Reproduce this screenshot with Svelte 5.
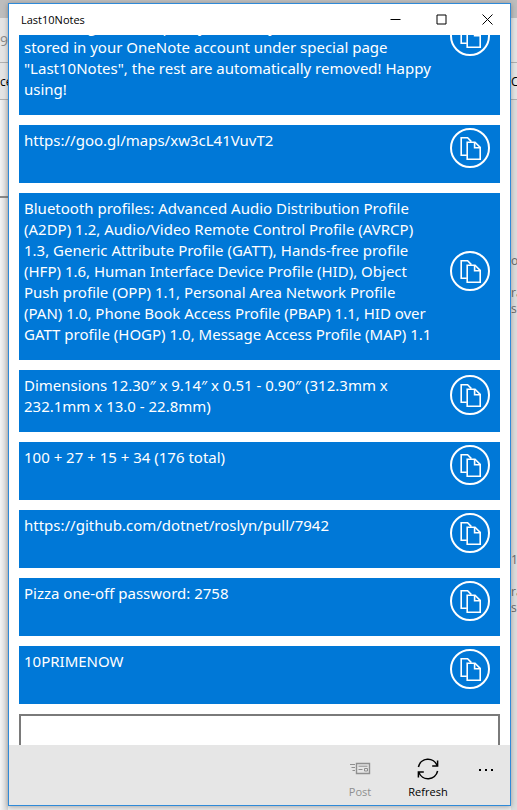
<script>
  import { onMount } from 'svelte'

  const notes = [
    'Welcome to Last10Notes!\nType a note below and press Post to save it.\nAlso using it we keep only last 10 by date\nstored in your OneNote account under special page\n"Last10Notes", the rest are automatically removed! Happy\nusing!',
    'https://goo.gl/maps/xw3cL41VuvT2',
    'Bluetooth profiles: Advanced Audio Distribution Profile\n(A2DP) 1.2, Audio/Video Remote Control Profile (AVRCP)\n1.3, Generic Attribute Profile (GATT), Hands-free profile\n(HFP) 1.6, Human Interface Device Profile (HID), Object\nPush profile (OPP) 1.1, Personal Area Network Profile\n(PAN) 1.0, Phone Book Access Profile (PBAP) 1.1, HID over\nGATT profile (HOGP) 1.0, Message Access Profile (MAP) 1.1',
    'Dimensions 12.30″ x 9.14″ x 0.51 - 0.90″ (312.3mm x\n232.1mm x 13.0 - 22.8mm)',
    '100 + 27 + 15 + 34 (176 total)',
    'https://github.com/dotnet/roslyn/pull/7942',
    'Pizza one-off password: 2758',
    '10PRIMENOW'
  ]

  let list
  let draft = $state('')

  // the welcome note starts half scrolled away
  onMount(() => {
    list.scrollTop = 66
  })

  function copy(note) {
    navigator.clipboard?.writeText(note)
  }
</script>

<div class="desktop">
  <div class="backdrop" aria-hidden="true">
    <div class="strip"></div>
    <div class="row tabs"><span>9</span></div>
    <div class="row menu"><span>ce</span><span>C</span></div>
    <div class="page">
      <div class="side"><div class="rule"></div></div>
      <div class="side right">
        <p>or</p>
        <p>ra<br />s:</p>
        <p class="later">1:</p>
        <p>ra<br />s:</p>
      </div>
    </div>
  </div>

  <main class="window">
    <header>
      <h1>Last10Notes</h1>
      <button class="caption" aria-label="Minimize">
        <svg width="11" height="11" viewBox="0 0 11 11"><path d="M0.5 5.5H10.5" /></svg>
      </button>
      <button class="caption" aria-label="Maximize">
        <svg width="11" height="11" viewBox="0 0 11 11"><path d="M1 1H10V10H1Z" /></svg>
      </button>
      <button class="caption" aria-label="Close">
        <svg width="11" height="11" viewBox="0 0 11 11"><path d="M0.5 0.5L10.5 10.5M10.5 0.5L0.5 10.5" /></svg>
      </button>
    </header>

    <div class="list" bind:this={list}>
      {#each notes as note}
        <article class="note">
          <p>{note}</p>
          <button class="copy" aria-label="Copy note" onclick={() => copy(note)}>
            <svg width="40" height="40" viewBox="0 0 40 40">
              <circle cx="20" cy="20" r="19" stroke-width="2" />
              <path d="M16.8 27.2H11.2V9.8H17.6L21.4 13.6" />
              <path d="M17.2 14.2H25L30.2 19.4V31.2H17.2Z" />
              <path d="M24.6 14.2V19.8H30.2" />
            </svg>
          </button>
        </article>
      {/each}
      <textarea aria-label="New note" bind:value={draft}></textarea>
    </div>

    <footer>
      <button class="command" disabled={!draft}>
        <svg width="22" height="22" viewBox="0 0 22 22">
          <path d="M7.5 5.5H20.5V15.5H7.5Z" stroke-width="1.4" />
          <path d="M1 6.5H6M2.5 9.5H6M3.5 12.5H6M9.5 8.2H18.5M9.5 11.5H13.5M15.5 10.5H18.5V13H15.5Z" />
        </svg>
        <span>Post</span>
      </button>
      <button class="command">
        <svg width="22" height="22" viewBox="0 0 22 22">
          <path d="M1.4 9A9.8 9.8 0 0 1 20.2 7.8M20.6 13A9.8 9.8 0 0 1 1.8 14.2" stroke-width="1.5" />
          <path d="M20.6 2.5V8H15.2M1.4 19.5V14H6.8" stroke-width="1.5" />
        </svg>
        <span>Refresh</span>
      </button>
      <button class="more" aria-label="More">
        <svg width="16" height="4" viewBox="0 0 16 4">
          <path class="dots" d="M1 1H3V3H1ZM7 1H9V3H7ZM13 1H15V3H13Z" />
        </svg>
      </button>
    </footer>
  </main>
</div>

<style>
  :global(body) {
    margin: 0;
  }

  .desktop {
    position: relative;
    box-sizing: border-box;
    height: 100vh;
    padding: 3px 6px 4px 8px;
    overflow: hidden;
    font-family: "Open Sans", "Noto Sans", sans-serif;
    font-size: 11px;
    color: #000;
  }

  .backdrop {
    position: absolute;
    inset: 0;
    display: flex;
    flex-direction: column;
    background: #ededed;
    font-size: 12px;
  }

  .strip {
    height: 18px;
    background: #bdbdbd;
  }

  .row {
    display: flex;
    justify-content: space-between;
    align-items: center;
    border-bottom: 1px solid #b0b0b0;
    background: #e4e4e4;
  }

  .tabs {
    height: 44px;
    color: #8a8a8a;
    font-size: 14px;
  }

  .menu {
    height: 36px;
  }

  .menu span:last-child {
    width: 6px;
    overflow: hidden;
  }

  .page {
    flex: 1;
    display: flex;
    justify-content: space-between;
  }

  .side {
    width: 8px;
    background: linear-gradient(90deg, #f4f4f4, #d4d4d4);
  }

  .rule {
    height: 96px;
    border-bottom: 2px solid #888;
  }

  .right {
    width: 6px;
    box-sizing: border-box;
    padding-top: 153px;
    overflow: hidden;
    background: #dcdcdc;
    color: #6a6a6a;
  }

  .right p {
    margin: 0 0 16px;
    line-height: 16px;
  }

  .right .later {
    padding-top: 219px;
  }

  .window {
    position: relative;
    box-sizing: border-box;
    height: 100%;
    display: flex;
    flex-direction: column;
    border: 1px solid #2f8ad8;
    background: #fff;
    box-shadow: 0 1px 5px rgba(0, 0, 0, 0.3);
  }

  header {
    flex: none;
    display: flex;
    height: 31px;
    padding-left: 12px;
  }

  h1 {
    flex: 1;
    margin: 0;
    font-size: 11px;
    font-weight: 400;
    line-height: 31px;
  }

  button {
    padding: 0;
    border: 0;
    background: none;
    color: inherit;
    font: inherit;
  }

  .caption {
    width: 46px;
  }

  svg {
    display: block;
    margin: 0 auto;
    fill: none;
    stroke: currentColor;
  }

  .list {
    flex: 1;
    min-height: 0;
    display: flex;
    flex-direction: column;
    gap: 10px;
    padding: 0 10px;
    overflow-y: auto;
    scrollbar-width: none;
  }

  .note {
    flex: none;
    display: flex;
    align-items: center;
    padding: 3px 10px 0 5px;
    background: #0078d7;
    color: #fff;
  }

  .note p {
    flex: 1;
    align-self: flex-start;
    min-width: 0;
    margin: 0;
    padding: 2px 0 15px;
    font-family: "Noto Sans", "Open Sans", sans-serif;
    font-size: 15px;
    line-height: 21px;
    white-space: pre;
  }

  .copy {
    flex: none;
    width: 40px;
    height: 40px;
    margin-bottom: 15px;
  }

  .copy path {
    stroke-width: 1.6;
  }

  textarea {
    flex: none;
    box-sizing: border-box;
    width: 100%;
    height: 96px;
    padding: 5px;
    border: 2px solid #7a7a7a;
    font: inherit;
    font-size: 15px;
    resize: none;
  }

  footer {
    flex: none;
    display: flex;
    justify-content: flex-end;
    height: 60px;
    background: #e6e6e6;
  }

  .command {
    width: 68px;
    padding-top: 8px;
  }

  .command span {
    display: block;
    margin-top: 4px;
    line-height: 16px;
  }

  .command:disabled {
    color: #8f8f8f;
  }

  .more {
    width: 48px;
    padding-bottom: 10px;
  }

  .dots {
    fill: currentColor;
    stroke: none;
  }
</style>
